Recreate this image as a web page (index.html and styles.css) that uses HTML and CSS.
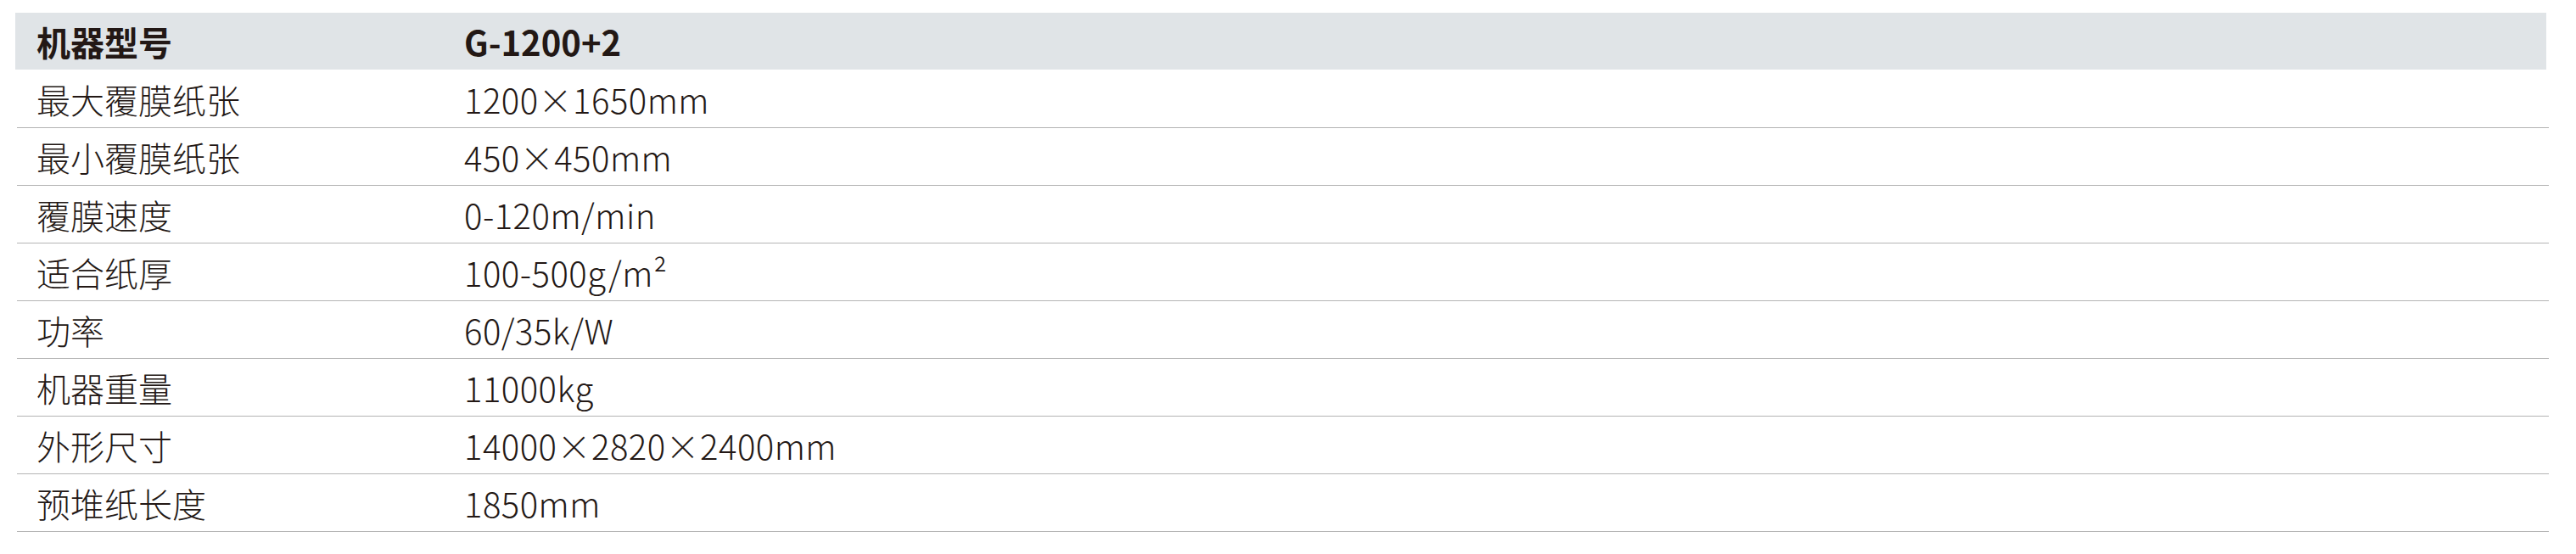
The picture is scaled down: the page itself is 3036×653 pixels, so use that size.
FILE: index.html
```html
<!DOCTYPE html>
<html lang="zh-CN">
<head>
<meta charset="utf-8">
<title>参数表</title>
<link rel="stylesheet" href="styles.css">
</head>
<body>
<div class="specs">
  <div class="head">
    <div class="label">机器型号</div>
    <div class="value">G-1200+2</div>
  </div>
  <div class="rows">
    <div class="row"><div class="label">最大覆膜纸张</div><div class="value">1200×1650mm</div></div>
    <div class="row"><div class="label">最小覆膜纸张</div><div class="value">450×450mm</div></div>
    <div class="row"><div class="label">覆膜速度</div><div class="value">0-120m/min</div></div>
    <div class="row"><div class="label">适合纸厚</div><div class="value">100-500g/m²</div></div>
    <div class="row"><div class="label">功率</div><div class="value">60/35k/W</div></div>
    <div class="row"><div class="label">机器重量</div><div class="value">11000kg</div></div>
    <div class="row"><div class="label">外形尺寸</div><div class="value">14000×2820×2400mm</div></div>
    <div class="row"><div class="label">预堆纸长度</div><div class="value">1850mm</div></div>
  </div>
</div>
</body>
</html>
```
FILE: styles.css
```css
html, body {
  margin: 0;
  padding: 0;
  background: #ffffff;
}
body {
  font-family: "Noto Sans CJK SC", "Noto Sans", sans-serif;
  color: #231815;
}
.specs {
  padding: 15px 0 0 18px;
  width: 2986px;
}
.head {
  display: grid;
  grid-template-columns: 529px 1fr;
  align-items: center;
  height: 67px;
  width: 2983px;
  background: #e0e4e7;
  font-size: 40px;
  font-weight: 700;
  line-height: 1;
}
.head .label {
  padding-left: 25px;
}
.rows {
  padding: 1px 0 0 2px;
}
.row {
  display: grid;
  grid-template-columns: 527px 1fr;
  align-items: center;
  box-sizing: border-box;
  height: 68px;
  width: 2984px;
  border-bottom: 1px solid #b4b4b4;
  font-family: "Noto Sans CJK SC Light", "Noto Sans CJK SC DemiLight", "Noto Sans CJK SC", "Noto Sans", sans-serif;
  font-size: 40px;
  font-weight: 300;
  line-height: 1;
}
.row .label {
  padding-left: 23px;
}
.row .value {
  letter-spacing: 0.5px;
}
```
